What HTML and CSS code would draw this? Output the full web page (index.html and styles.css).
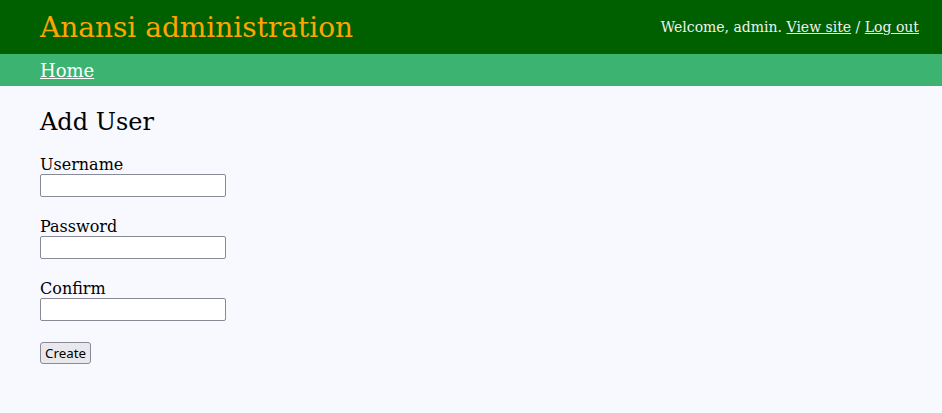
FILE: index.html
```html
<!DOCTYPE html>
<html>
<head>
<meta charset="utf-8">
<title>Anansi administration</title>
<link rel="stylesheet" href="styles.css">
</head>
<body>
<header class="header">
  <div class="brand">Anansi administration</div>
  <div class="user-tools">Welcome, admin. <a href="#">View site</a> / <a href="#">Log out</a></div>
</header>
<nav class="breadcrumbs"><a href="#">Home</a></nav>
<main class="content">
  <h1 class="page-title">Add User</h1>
  <form class="user-form">
    <div class="field">
      <label class="field-label">Username</label>
      <input class="field-input" type="text">
    </div>
    <div class="field">
      <label class="field-label">Password</label>
      <input class="field-input" type="password">
    </div>
    <div class="field">
      <label class="field-label">Confirm</label>
      <input class="field-input" type="password">
    </div>
    <div class="actions">
      <button class="btn" type="button">Create</button>
    </div>
  </form>
</main>
</body>
</html>
```
FILE: styles.css
```css
html, body {
  margin: 0;
  padding: 0;
}
body {
  background: #f8f8ff;
  font-family: "DejaVu Serif", serif;
  color: #000;
  height: 413px;
}
.header {
  background: #006000;
  height: 54px;
  display: flex;
  align-items: center;
  justify-content: space-between;
  padding: 0 23px 0 40px;
}
.brand {
  color: #ffa500;
  font-size: 28px;
}
.user-tools {
  color: #f0f0f0;
  font-size: 14px;
}
.user-tools a {
  color: #f0f0f0;
}
.breadcrumbs {
  background: #3cb371;
  height: 32px;
  display: flex;
  align-items: center;
  padding-left: 40px;
}
.breadcrumbs a {
  color: #fff;
  font-size: 18px;
}
.content {
  padding: 0 40px;
}
.page-title {
  font-size: 24px;
  font-weight: normal;
  margin: 0;
  padding-top: 21px;
  line-height: 30px;
}
.user-form {
  display: flex;
  flex-direction: column;
  gap: 20px;
  padding-top: 18px;
}
.field {
  display: flex;
  flex-direction: column;
  align-items: flex-start;
}
.field-label {
  font-size: 16px;
  line-height: 19px;
}
.field-input {
  box-sizing: border-box;
  width: 186px;
  height: 23px;
  margin: 0;
  border: 1px solid #8a8a96;
  border-radius: 2px;
  background: #fff;
}
.actions {
  display: flex;
  padding-top: 1px;
}
.btn {
  box-sizing: border-box;
  height: 22px;
  font-family: "Noto Sans", "Open Sans", sans-serif;
  font-size: 13.33px;
  line-height: 18px;
  padding: 0 4px;
  border: 1px solid #8a8a96;
  border-radius: 3px;
  background: #e9e9ed;
  color: #000;
}
```
